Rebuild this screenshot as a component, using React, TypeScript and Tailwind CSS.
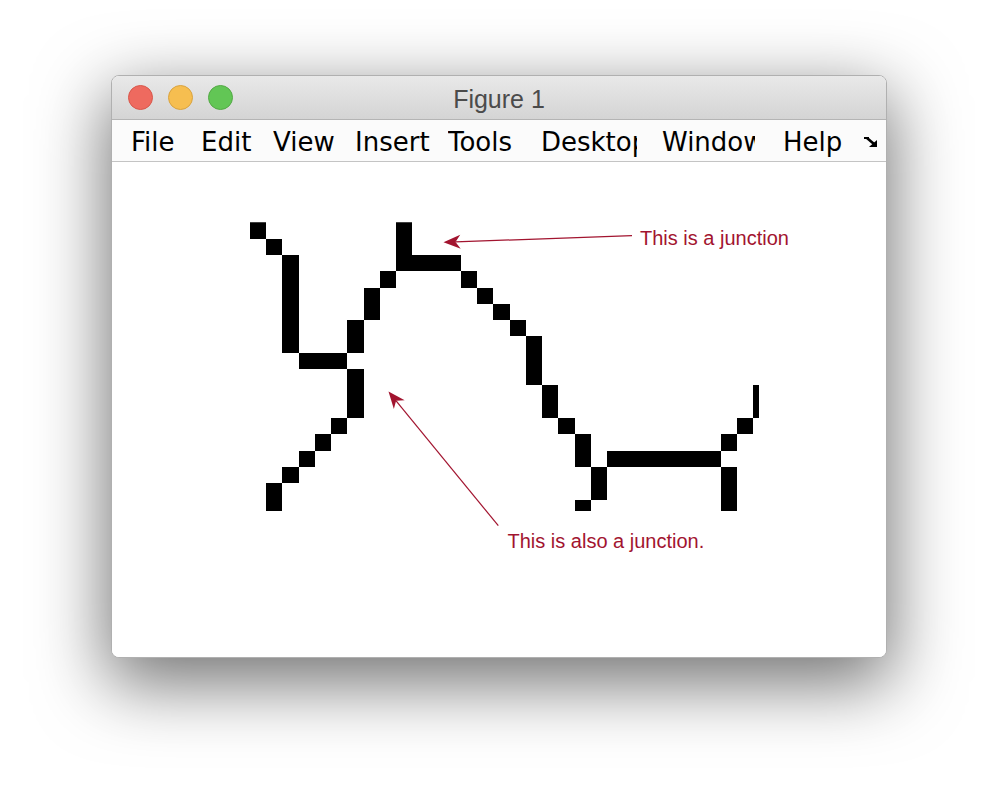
import React from "react";

// pixel image cells as [col, row], read off the figure
const CELLS: [number, number][] = [
  [0, 0], [9, 0],
  [1, 1], [9, 1],
  [2, 2], [9, 2], [10, 2], [11, 2], [12, 2],
  [2, 3], [8, 3], [13, 3],
  [2, 4], [7, 4], [14, 4],
  [2, 5], [7, 5], [15, 5],
  [2, 6], [6, 6], [16, 6],
  [2, 7], [6, 7], [17, 7],
  [3, 8], [4, 8], [5, 8], [17, 8],
  [6, 9], [17, 9],
  [6, 10], [18, 10], [31, 10],
  [6, 11], [18, 11], [31, 11],
  [5, 12], [19, 12], [30, 12],
  [4, 13], [20, 13], [29, 13],
  [3, 14], [20, 14], [22, 14], [23, 14], [24, 14], [25, 14], [26, 14], [27, 14], [28, 14],
  [2, 15], [21, 15], [29, 15],
  [1, 16], [21, 16], [29, 16],
  [1, 17], [20, 17], [29, 17],
];

const MENU = [
  { label: "File", w: "w-[70px]", clip: "" },
  { label: "Edit", w: "w-[72px]", clip: "" },
  { label: "View", w: "w-[82px]", clip: "" },
  { label: "Insert", w: "w-[93px]", clip: "" },
  { label: "Tools", w: "w-[93px]", clip: "" },
  { label: "Desktop", w: "w-[121px]", clip: "w-[96px]" },
  { label: "Window", w: "w-[121px]", clip: "w-[93px]" },
  { label: "Help", w: "w-[70px]", clip: "" },
];

const RED = "#a2142f";

function head(tail: [number, number], tip: [number, number]) {
  const dx = tip[0] - tail[0];
  const dy = tip[1] - tail[1];
  const len = Math.hypot(dx, dy);
  const ux = dx / len;
  const uy = dy / len;
  const nx = -uy;
  const ny = ux;
  const L = 17;
  const W = 7;
  const N = 12;
  const pts = [
    [tip[0], tip[1]],
    [tip[0] - L * ux + W * nx, tip[1] - L * uy + W * ny],
    [tip[0] - N * ux, tip[1] - N * uy],
    [tip[0] - L * ux - W * nx, tip[1] - L * uy - W * ny],
  ];
  return {
    points: pts.map((p) => p.join(",")).join(" "),
    notch: [tip[0] - N * ux, tip[1] - N * uy] as [number, number],
  };
}

function TextArrow({
  tail,
  tip,
  text,
  tx,
  ty,
}: {
  tail: [number, number];
  tip: [number, number];
  text: string;
  tx: number;
  ty: number;
}) {
  const h = head(tail, tip);
  return (
    <g>
      <line x1={tail[0]} y1={tail[1]} x2={h.notch[0]} y2={h.notch[1]} stroke={RED} strokeWidth={1.2} />
      <polygon points={h.points} fill={RED} />
      <text x={tx} y={ty} fill={RED} fontSize={20} fontFamily='"Liberation Sans", Arial, sans-serif'>
        {text}
      </text>
    </g>
  );
}

function Traffic({ fill, edge }: { fill: string; edge: string }) {
  return <div className="w-[25px] h-[25px] rounded-full border" style={{ background: fill, borderColor: edge }} />;
}

export default function App() {
  return (
    <div className="w-[998px] h-[806px] bg-white overflow-hidden pt-[75px] pl-[111px]">
      {/* Window */}
      <div className="w-[776px] h-[583px] flex flex-col rounded-[8px] border border-[#b0b0b0] bg-white overflow-hidden shadow-[0_22px_70px_4px_rgba(0,0,0,0.55)]">
        {/* Title bar */}
        <div className="relative h-[44px] shrink-0 flex items-center pl-[16px] gap-[15px] bg-gradient-to-b from-[#e9e9e9] to-[#d4d4d4] border-b border-[#b4b4b4]">
          <Traffic fill="#ee6a5f" edge="#d8574b" />
          <Traffic fill="#f6be50" edge="#d9a33f" />
          <Traffic fill="#62c655" edge="#53a945" />
          <div className="absolute inset-0 flex items-center justify-center pt-[3px] pointer-events-none">
            <span className="text-[25px] text-[#4b4b4b] font-['Liberation_Sans',Arial,sans-serif] leading-none">Figure 1</span>
          </div>
        </div>

        {/* Menu bar */}
        <div className="h-[42px] shrink-0 flex items-start pl-[19px] pt-[4px] bg-[#fbfbfb] border-b border-[#c4c4c4] font-['DejaVu_Sans',sans-serif] text-[26px] text-black leading-[36px]">
          {MENU.map((m) => (
            <div key={m.label} className={`${m.w} shrink-0`}>
              <div className={`${m.clip} overflow-hidden whitespace-nowrap`}>{m.label}</div>
            </div>
          ))}
          <div className="ml-[11px] mt-[13px]">
            <svg width="15" height="11" viewBox="0 0 15 11">
              <rect x="0" y="0" width="5" height="2" fill="#000" />
              <line x1="3" y1="1" x2="10" y2="7" stroke="#000" strokeWidth="2.6" />
              <polygon points="13,10 5,10 13,3" fill="#000" />
            </svg>
          </div>
        </div>

        {/* Figure canvas */}
        <div className="relative flex-1 bg-white">
          <svg className="absolute inset-0" width="774" height="494" viewBox="112 163 774 494">
            <svg x="250" y="223.3" width="509" height="288.7" viewBox="0 0 31.36 17.7" preserveAspectRatio="none">
              {CELLS.map(([c, r]) => (
                <rect key={`${c}-${r}`} x={c} y={r} width={1} height={1} fill="#000" shapeRendering="crispEdges" />
              ))}
            </svg>
            <TextArrow tail={[632, 236.7]} tip={[443.5, 243.3]} text="This is a junction" tx={640} ty={246} />
            <TextArrow tail={[498.3, 526.7]} tip={[388.5, 392.5]} text="This is also a junction." tx={507.5} ty={549} />
          </svg>
        </div>
      </div>
    </div>
  );
}
